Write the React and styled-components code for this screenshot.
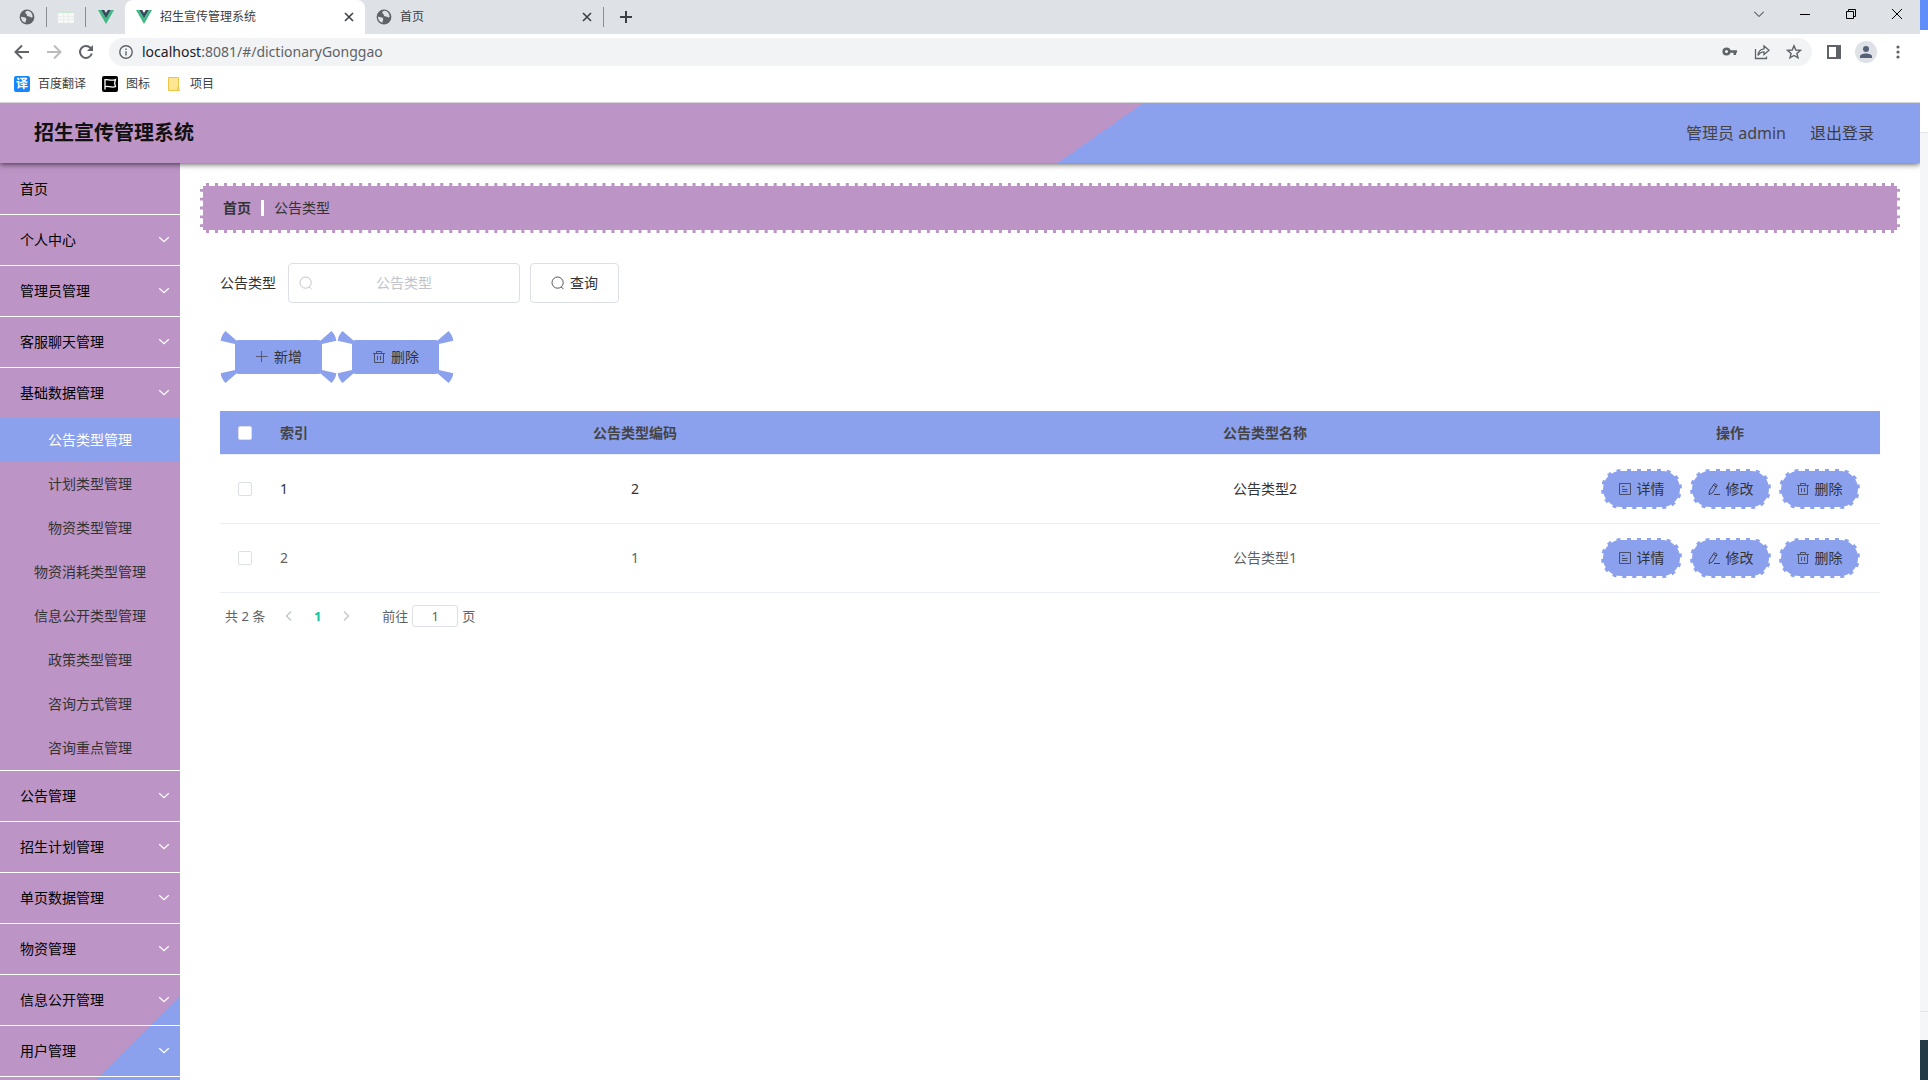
import React, { useState } from 'react'
import styled, { createGlobalStyle } from 'styled-components';

const PURPLE = '#bc94c5';
const BLUE = '#8ca1ee';

const GlobalStyle = createGlobalStyle`
  * {
    box-sizing: border-box;
  }
  body {
    margin: 0;
    overflow: hidden;
    background: #fff;
  }
  body, button, input {
    font-family: "Noto Sans", "Noto Sans CJK SC", sans-serif;
    font-size: 14px;
    line-height: 20px;
    color: #333;
  }
  button {
    margin: 0;
    padding: 0;
    border: 0;
    background: none;
    cursor: pointer;
  }
  a {
    color: inherit;
    text-decoration: none;
  }
  svg {
    display: block;
    flex: none;
  }
`;

/* ---------- desktop ---------- */

const Desktop = styled.div`
  display: flex;
  height: 100vh;
  overflow: hidden;
`;

const Browser = styled.div`
  flex: 1;
  min-width: 0;
  display: flex;
  flex-direction: column;
`;

const Behind = styled.div`
  width: 8px;
  display: flex;
  flex-direction: column;
`;

const BehindPart = styled.div`
  height: ${(p) => p.$height || 'auto'};
  flex: ${(p) => (p.$height ? 'none' : 1)};
  background: ${(p) => p.$color};
  border-bottom: ${(p) => (p.$line ? '1px solid #e2e4e8' : '0')};
`;

/* ---------- browser frame ---------- */

const TabStrip = styled.div`
  display: flex;
  align-items: stretch;
  height: 34px;
  background: #dee1e6;
`;

const PinnedTab = styled.div`
  display: flex;
  align-items: center;
  justify-content: center;
  width: 39px;
  margin: 7px 0;
  border-right: ${(p) => (p.$last ? '0' : '1px solid #8a8d91')};
`;

const PinnedTabs = styled.div`
  display: flex;
  width: 125px;
  padding-left: 8px;
`;

const Tab = styled.div`
  display: flex;
  align-items: center;
  gap: 8px;
  width: ${(p) => (p.$active ? '240px' : '238px')};
  padding: 0 11px;
  font-size: 12px;
  color: #3c4043;
  background: ${(p) => (p.$active ? '#fff' : 'transparent')};
  border-radius: 8px 8px 0 0;

  span {
    flex: 1;
  }
`;

const TabDivider = styled.div`
  width: 1px;
  margin: 7px 0;
  background: #8a8d91;
`;

const NewTab = styled.button`
  width: 44px;
  display: flex;
  align-items: center;
  justify-content: center;
`;

const WindowButtons = styled.div`
  display: flex;
  margin-left: auto;
  height: 28px;

  button {
    display: flex;
    align-items: center;
    justify-content: center;
    width: 46px;
  }
`;

const Toolbar = styled.div`
  display: flex;
  align-items: center;
  height: 36px;
  padding: 0 6px;
  background: #fff;
`;

const ToolButton = styled.button`
  display: flex;
  align-items: center;
  justify-content: center;
  width: 32px;
  height: 28px;
`;

const AddressBar = styled.div`
  flex: 1;
  display: flex;
  align-items: center;
  height: 28px;
  margin: 0 6px 0 7px;
  padding-left: 10px;
  padding-right: 2px;
  border-radius: 14px;
  background: #f1f3f4;
`;

const Address = styled.div`
  flex: 1;
  padding-left: 9px;
  font-size: 14px;
  line-height: 18px;
  color: #5f6368;

  b {
    font-weight: 400;
    color: #202124;
  }
`;

const Avatar = styled.div`
  width: 22px;
  height: 22px;
  border-radius: 50%;
  background: #dee1e6;
  display: flex;
  align-items: center;
  justify-content: center;
`;

const Bookmarks = styled.div`
  display: flex;
  align-items: center;
  gap: 16px;
  height: 33px;
  padding: 0 14px 4px;
  border-bottom: 1px solid #d5d5d8;
`;

const Bookmark = styled.a`
  display: flex;
  align-items: center;
  gap: 8px;
  font-size: 12px;
  color: #3c4043;
`;

const TranslateIcon = styled.span`
  width: 16px;
  height: 16px;
  border-radius: 2px;
  background: #1687fb;
  color: #fff;
  font-size: 12px;
  font-weight: 700;
  line-height: 16px;
  text-align: center;
`;

/* ---------- page ---------- */

const Header = styled.header`
  position: relative;
  z-index: 1;
  flex: none;
  display: flex;
  align-items: center;
  height: 60px;
  padding: 0 46px 0 34px;
  background: linear-gradient(145deg, ${PURPLE} 57%, ${BLUE} 57%);
  box-shadow: 0 1px 6px rgba(0, 0, 0, 0.7);
  clip-path: inset(0 0 -12px 0);

  h1 {
    flex: 1;
    margin: 0;
    font-size: 20px;
    line-height: 30px;
    color: #111;
  }
`;

const HeaderItems = styled.div`
  display: flex;
  gap: 24px;
  font-size: 16px;
  color: #444;
`;

const LogoutButton = styled.button`
  font-size: 16px;
  color: #3c3c3c;
`;

const Body = styled.div`
  flex: 1;
  min-height: 0;
  display: flex;
`;

const Sidebar = styled.nav`
  flex: none;
  width: 180px;
  padding-top: 1px;
  overflow: hidden;
  background: linear-gradient(135deg, ${PURPLE} 716px, ${BLUE} 716px);
`;

const MenuGroup = styled.div`
  border-bottom: 1px solid #fff;
`;

const MenuTitle = styled.button`
  display: flex;
  align-items: center;
  justify-content: space-between;
  width: 100%;
  height: 50px;
  padding: 0 10px 0 20px;
  color: #000;
`;

const SubItem = styled.a`
  display: block;
  height: 44px;
  line-height: 44px;
  text-align: center;
  color: ${(p) => (p.$active ? '#fff' : '#333')};
  background: ${(p) => (p.$active ? BLUE : 'transparent')};
`;

const Main = styled.main`
  flex: 1;
  min-width: 0;
  padding: 20px;
`;

const Breadcrumb = styled.div`
  display: flex;
  align-items: center;
  gap: 10px;
  height: 50px;
  padding: 0 20px;
  border: 3px dashed #fff;
  background: ${PURPLE};

  a {
    font-weight: 700;
  }
`;

const Separator = styled.i`
  width: 3px;
  height: 16px;
  background: #fff;
`;

const Content = styled.div`
  padding: 30px 20px;
`;

const SearchForm = styled.form`
  display: flex;
  align-items: center;
  gap: 10px;

  label {
    margin-right: 2px;
  }
`;

const SearchBox = styled.div`
  display: flex;
  align-items: center;
  width: 232px;
  height: 40px;
  padding: 0 10px;
  border: 1px solid #dcdfe6;
  border-radius: 4px;

  input {
    flex: 1;
    min-width: 0;
    padding: 0 14px 0 0;
    border: 0;
    outline: 0;
    text-align: center;
  }
  input::placeholder {
    color: #c0c4cc;
  }
`;

const SearchButton = styled.button`
  display: flex;
  align-items: center;
  gap: 5px;
  height: 40px;
  padding: 0 20px;
  border: 1px solid #dcdfe6;
  border-radius: 4px;
`;

const Actions = styled.div`
  display: flex;
  margin: 28px 0;
`;

const WingFrame = styled.div`
  position: relative;
  padding: 9px 15px;
`;

const WingButton = styled.button`
  display: flex;
  align-items: center;
  gap: 5px;
  height: 34px;
  padding: 0 20px;
  border-radius: 4px;
  background: ${BLUE};
`;

const Wing = styled.svg`
  position: absolute;
  ${(p) => (p.$right ? 'right: 0;' : 'left: 0;')}
  ${(p) => (p.$bottom ? 'bottom: 0;' : 'top: 0;')}
  transform: scale(${(p) => (p.$right ? -1 : 1)}, ${(p) => (p.$bottom ? -1 : 1)});
`;

const Table = styled.table`
  width: 100%;
  table-layout: fixed;
  border-collapse: separate;
  border-spacing: 0;

  th, td {
    padding: 0 10px;
    text-align: center;
    border-bottom: 1px solid #ebeef5;
  }
  th {
    height: 44px;
    color: #444;
    font-weight: 700;
    background: ${BLUE};
    background-clip: padding-box;
  }
  td {
    height: 69px;
  }
  th:nth-child(2), td:nth-child(2) {
    text-align: left;
  }
`;

const Row = styled.tr`
  color: ${(p) => (p.$hover ? '#333' : '#606266')};
`;

const CheckBox = styled.input.attrs({ type: 'checkbox' })`
  appearance: none;
  display: block;
  width: 14px;
  height: 14px;
  margin: 0 8px;
  border: 1px solid #dcdfe6;
  border-radius: 2px;
  background: #fff;

  &:checked {
    background: ${BLUE};
  }
`;

const RowActions = styled.div`
  display: flex;
  justify-content: center;
  gap: 8px;
`;

const RowButton = styled.button`
  display: flex;
  align-items: center;
  gap: 5px;
  height: 40px;
  padding: 0 15px;
  border: 2px dashed #fff;
  border-radius: 20px;
  background: ${BLUE};
`;

const Pagination = styled.div`
  display: flex;
  align-items: center;
  height: 22px;
  margin-top: 12px;
  padding-left: 5px;
  font-size: 13px;
  color: #606266;

  label {
    display: flex;
    align-items: center;
    gap: 4px;
    margin-left: 25px;
  }
  label input {
    width: 46px;
    height: 22px;
    padding: 0;
    border: 1px solid #dcdfe6;
    border-radius: 3px;
    font-size: 13px;
    color: #606266;
    text-align: center;
  }
`;

const PageButton = styled.button`
  display: flex;
  align-items: center;
  justify-content: center;
  width: ${(p) => (p.$current ? '35px' : '22px')};
  font-size: 13px;
  font-weight: 700;
  color: ${(p) => (p.$current ? '#18c09c' : '#c0c4cc')};
`;

const PageButtons = styled.div`
  display: flex;
  margin-left: 13px;
`;

/* ---------- icons ---------- */

const Icon = ({ size = 14, box = 14, width = 1, color = 'currentColor', children }) => (
  <svg width={size} height={size} viewBox={`0 0 ${box} ${box}`} fill="none" stroke={color} strokeWidth={width} aria-hidden="true">
    {children}
  </svg>
);

const ChevronIcon = ({ flip }) => (
  <Icon size={12} box={12} color={flip ? '#c0c4cc' : '#fff'} width={1.3}>
    {flip === 'left' && <path d="M8 1.5L3.5 6L8 10.5" />}
    {flip === 'right' && <path d="M4 1.5L8.5 6L4 10.5" />}
    {!flip && <path d="M1.2 3.3L6 7.7L10.8 3.3" />}
  </Icon>
);

const SearchIcon = ({ color = '#555' }) => (
  <Icon color={color}>
    <circle cx="6.6" cy="6.6" r="5.6" />
    <path d="M10.2 11.2L12.4 12.8" />
  </Icon>
);

const PlusIcon = () => (
  <Icon color="#555a70">
    <path d="M6.5 1V12M1 6.5H12.5" />
  </Icon>
);

const TrashIcon = () => (
  <Icon color="#4b506a">
    <path d="M1 3.5H13M2.5 3.5V12.5H11.5V3.5M4.5 3.5V1.5H9.5V3.5M5.5 6V10M8.5 6V10" />
  </Icon>
);

const DetailIcon = () => (
  <Icon color="#4b506a">
    <path d="M1.5 1.5H12.5V12.5H1.5ZM4 4.5H6.5M4 7.5H9.5M4 9.5H9.5" />
  </Icon>
);

const EditIcon = () => (
  <Icon color="#3c405a">
    <path d="M2.5 9L7.4 1.6L10.2 3.4L5.4 11L2 12.6ZM6.4 3.2L9.2 5M7 12.5H13" />
  </Icon>
);

const GlobeIcon = () => (
  <svg width="16" height="16" viewBox="0 0 16 16" aria-hidden="true">
    <circle cx="8" cy="8" r="7.4" fill="#5f6368" />
    <path d="M8.5 1.8C6 2.4 5.7 4 7 4.8C8.3 5.4 7.2 6.8 8.8 7.2C10.6 7.2 11.8 8.8 13.6 8.3C13.8 4.8 11.6 2 8.5 1.8Z" fill="#dee1e6" />
    <path d="M2 7.4C3.6 8.6 6 7.6 7 9.2C7.8 10.8 6.6 11.4 6.4 13.7C3.6 13 1.8 10.4 2 7.4Z" fill="#dee1e6" />
  </svg>
);

const VueIcon = () => (
  <svg width="16" height="16" viewBox="0 0 16 16" aria-hidden="true">
    <path d="M0 1H3.2L8 9.3L12.8 1H16L8 15Z" fill="#41b883" />
    <path d="M3.2 1H6.2L8 4.1L9.8 1H12.8L8 9.3Z" fill="#35495e" />
  </svg>
);

const SheetIcon = () => (
  <svg width="16" height="14" viewBox="0 0 16 14" aria-hidden="true">
    <path d="M0 1H16V13H0Z" fill="#f7f7f7" />
    <path d="M0 1H16V3H0Z" fill="#cfe8d3" />
    <path d="M0 6.5H16M0 9.5H16M5.5 3V13M10.5 3V13" stroke="#ebecec" fill="none" />
  </svg>
);

const CloseIcon = () => (
  <Icon size={10} box={10} width={1.6} color="#3c4043">
    <path d="M1 1L9 9M9 1L1 9" />
  </Icon>
);

const FlagIcon = () => (
  <svg width="16" height="16" viewBox="0 0 16 16" aria-hidden="true">
    <rect width="16" height="16" rx="2" fill="#000" />
    <path d="M3 3V13.5M3 4C5.5 2.6 8 5.4 13.5 3.6L12.6 7.2L13.5 10.6C9 12.2 6 9.4 3 10.8" fill="none" stroke="#fff" strokeWidth="1.3" />
  </svg>
);

const FolderIcon = () => (
  <svg width="16" height="16" viewBox="0 0 16 16" aria-hidden="true">
    <path d="M2.5 1.5H12.5V11L13.5 14.5H2.5Z" fill="#ffe694" stroke="#ecc545" />
    <path d="M11.5 14.5V11.5H13" fill="none" stroke="#ecc545" />
  </svg>
);

/* ---------- data ---------- */

const subMenu = [
  '公告类型管理',
  '计划类型管理',
  '物资类型管理',
  '物资消耗类型管理',
  '信息公开类型管理',
  '政策类型管理',
  '咨询方式管理',
  '咨询重点管理',
];

const menu = [
  { title: '首页', leaf: true },
  { title: '个人中心' },
  { title: '管理员管理' },
  { title: '客服聊天管理' },
  { title: '基础数据管理', children: subMenu },
  { title: '公告管理' },
  { title: '招生计划管理' },
  { title: '单页数据管理' },
  { title: '物资管理' },
  { title: '信息公开管理' },
  { title: '用户管理' },
];

const rows = [
  { id: 1, code: '2', name: '公告类型2' },
  { id: 2, code: '1', name: '公告类型1' },
];

/* ---------- components ---------- */

const WingedButton = ({ icon, children }) => (
  <WingFrame>
    {[[false, false], [true, false], [false, true], [true, true]].map(([right, bottom]) => (
      <Wing key={`${right}${bottom}`} $right={right} $bottom={bottom} width="17" height="14" viewBox="0 0 17 14" aria-hidden="true">
        <path d="M5.5 0C3 2.5 1 6 0.7 9.7L15 13L17 10Z" fill={BLUE} />
      </Wing>
    ))}
    <WingButton type="button">
      {icon}
      {children}
    </WingButton>
  </WingFrame>
);

const BrowserFrame = () => (
  <>
    <TabStrip>
      <PinnedTabs>
        <PinnedTab><GlobeIcon /></PinnedTab>
        <PinnedTab><SheetIcon /></PinnedTab>
        <PinnedTab $last><VueIcon /></PinnedTab>
      </PinnedTabs>
      <Tab $active>
        <VueIcon />
        <span>招生宣传管理系统</span>
        <button type="button" aria-label="关闭"><CloseIcon /></button>
      </Tab>
      <Tab>
        <GlobeIcon />
        <span>首页</span>
        <button type="button" aria-label="关闭"><CloseIcon /></button>
      </Tab>
      <TabDivider />
      <NewTab type="button" aria-label="新标签页">
        <Icon size={12} box={12} width={2} color="#3c4043"><path d="M6 0V12M0 6H12" /></Icon>
      </NewTab>
      <WindowButtons>
        <button type="button" aria-label="搜索标签页">
          <Icon size={10} box={10} color="#222"><path d="M0 2.5L5 7.5L10 2.5" /></Icon>
        </button>
        <button type="button" aria-label="最小化">
          <Icon size={10} box={10} color="#000"><path d="M0 5.5H10" /></Icon>
        </button>
        <button type="button" aria-label="还原">
          <Icon size={10} box={10} color="#000"><path d="M0.5 2.5H7.5V9.5H0.5ZM2.5 2.5V0.5H9.5V7.5H7.5" /></Icon>
        </button>
        <button type="button" aria-label="关闭窗口">
          <Icon size={10} box={10} color="#000"><path d="M0 0L10 10M10 0L0 10" /></Icon>
        </button>
      </WindowButtons>
    </TabStrip>
    <Toolbar>
      <ToolButton type="button" aria-label="后退">
        <Icon size={16} box={16} width={2} color="#5f6368"><path d="M15 8H2M8 1.5L1.5 8L8 14.5" /></Icon>
      </ToolButton>
      <ToolButton type="button" aria-label="前进">
        <Icon size={16} box={16} width={2} color="#babcbe"><path d="M1 8H14M8 1.5L14.5 8L8 14.5" /></Icon>
      </ToolButton>
      <ToolButton type="button" aria-label="刷新">
        <Icon size={16} box={16} width={2} color="#5f6368">
          <path d="M13.8 9.5A6 6 0 1 1 12.4 3.8L14 5.4" />
          <path d="M15 1V7H9Z" fill="#5f6368" stroke="none" />
        </Icon>
      </ToolButton>
      <AddressBar>
        <Icon color="#5f6368" width={1.4}>
          <circle cx="7" cy="7" r="6.2" />
          <path d="M7 6.2V10.4M7 3.6V5" />
        </Icon>
        <Address><b>localhost</b>:8081/#/dictionaryGonggao</Address>
        <ToolButton type="button" aria-label="密码">
          <Icon size={16} box={16} width={2.6} color="#5f6368">
            <circle cx="4.5" cy="7.5" r="2.8" />
            <path d="M7 7.5H15M12.8 7.5V11" />
          </Icon>
        </ToolButton>
        <ToolButton type="button" aria-label="分享">
          <Icon size={16} box={16} width={1.3} color="#5f6368">
            <path d="M1.5 5V14.5H12.5V12.5M4 11.5C4.3 7.5 6.5 5.2 10 4.8V2L15 6.3L10 10.5V7.8C7.5 7.8 5.5 9 4 11.5Z" />
          </Icon>
        </ToolButton>
        <ToolButton type="button" aria-label="收藏">
          <Icon size={16} box={16} width={1.4} color="#5f6368">
            <path d="M8 1.8L9.8 6L14.4 6.4L10.9 9.4L12 13.9L8 11.5L4 13.9L5.1 9.4L1.6 6.4L6.2 6Z" />
          </Icon>
        </ToolButton>
      </AddressBar>
      <ToolButton type="button" aria-label="侧边栏">
        <Icon width={2} color="#5f6368">
          <path d="M1 1H13V13H1Z" />
          <path d="M10 1H13V13H10Z" fill="#5f6368" />
        </Icon>
      </ToolButton>
      <ToolButton type="button" aria-label="用户">
        <Avatar>
          <svg width="12" height="12" viewBox="0 0 12 12" fill="#566076" aria-hidden="true">
            <circle cx="6" cy="3" r="3" />
            <path d="M0 12V10.5C0 8.5 3 7.5 6 7.5S12 8.5 12 10.5V12Z" />
          </svg>
        </Avatar>
      </ToolButton>
      <ToolButton type="button" aria-label="更多">
        <svg width="4" height="14" viewBox="0 0 4 14" fill="#5f6368" aria-hidden="true">
          <circle cx="2" cy="2" r="1.6" />
          <circle cx="2" cy="7" r="1.6" />
          <circle cx="2" cy="12" r="1.6" />
        </svg>
      </ToolButton>
    </Toolbar>
    <Bookmarks>
      <Bookmark href="#/fanyi"><TranslateIcon>译</TranslateIcon>百度翻译</Bookmark>
      <Bookmark href="#/icons"><FlagIcon />图标</Bookmark>
      <Bookmark href="#/project"><FolderIcon />项目</Bookmark>
    </Bookmarks>
  </>
);

const SideMenu = () => (
  <Sidebar>
    {menu.map((item) => (
      <MenuGroup key={item.title}>
        <MenuTitle type="button">
          {item.title}
          {!item.leaf && <ChevronIcon />}
        </MenuTitle>
        {item.children?.map((child, i) => (
          <SubItem key={child} href="#/dictionaryGonggao" $active={i === 0}>{child}</SubItem>
        ))}
      </MenuGroup>
    ))}
  </Sidebar>
);

const NoticeTable = () => (
  <Table>
    <colgroup>
      <col width="50" />
      <col width="50" />
      <col />
      <col />
      <col width="300" />
    </colgroup>
    <thead>
      <tr>
        <th><CheckBox aria-label="全选" /></th>
        <th>索引</th>
        <th>公告类型编码</th>
        <th>公告类型名称</th>
        <th>操作</th>
      </tr>
    </thead>
    <tbody>
      {rows.map((row) => (
        <Row key={row.id} $hover={row.id === 1}>
          <td><CheckBox aria-label={`选择 ${row.name}`} /></td>
          <td>{row.id}</td>
          <td>{row.code}</td>
          <td>{row.name}</td>
          <td>
            <RowActions>
              <RowButton type="button"><DetailIcon />详情</RowButton>
              <RowButton type="button"><EditIcon />修改</RowButton>
              <RowButton type="button"><TrashIcon />删除</RowButton>
            </RowActions>
          </td>
        </Row>
      ))}
    </tbody>
  </Table>
);

const App = () => {
  const [keyword, setKeyword] = useState('');
  const [page, setPage] = useState('1');

  return (
    <Desktop>
      <GlobalStyle />
      <Browser>
        <BrowserFrame />
        <Header>
          <h1>招生宣传管理系统</h1>
          <HeaderItems>
            <span>管理员 admin</span>
            <LogoutButton type="button">退出登录</LogoutButton>
          </HeaderItems>
        </Header>
        <Body>
          <SideMenu />
          <Main>
            <Breadcrumb>
              <a href="#/index">首页</a>
              <Separator />
              <span>公告类型</span>
            </Breadcrumb>
            <Content>
              <SearchForm onSubmit={(e) => e.preventDefault()}>
                <label htmlFor="keyword">公告类型</label>
                <SearchBox>
                  <SearchIcon color="#c0c4cc" />
                  <input
                    id="keyword"
                    placeholder="公告类型"
                    value={keyword}
                    onChange={(e) => setKeyword(e.target.value)}
                  />
                </SearchBox>
                <SearchButton type="submit"><SearchIcon />查询</SearchButton>
              </SearchForm>
              <Actions>
                <WingedButton icon={<PlusIcon />}>新增</WingedButton>
                <WingedButton icon={<TrashIcon />}>删除</WingedButton>
              </Actions>
              <NoticeTable />
              <Pagination>
                <span>共 2 条</span>
                <PageButtons>
                  <PageButton type="button" aria-label="上一页"><ChevronIcon flip="left" /></PageButton>
                  <PageButton type="button" $current>1</PageButton>
                  <PageButton type="button" aria-label="下一页"><ChevronIcon flip="right" /></PageButton>
                </PageButtons>
                <label>
                  前往
                  <input value={page} onChange={(e) => setPage(e.target.value)} />
                  页
                </label>
              </Pagination>
            </Content>
          </Main>
        </Body>
      </Browser>
      <Behind>
        <BehindPart $height="30px" $color="#5f8efa" />
        <BehindPart $height="103px" $color="#fff" $line />
        <BehindPart $height="879px" $color="#f5f6f8" $line />
        <BehindPart $height="28px" $color="#f5f6f8" />
        <BehindPart $color="#243b45" />
      </Behind>
    </Desktop>
  );
};

export default App
